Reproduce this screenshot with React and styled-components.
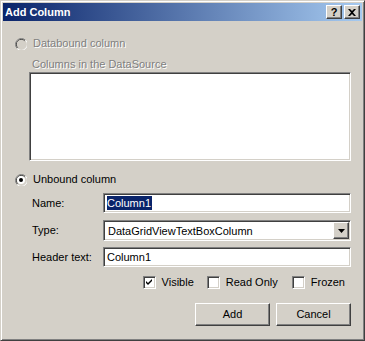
import React from 'react';
import styled, { createGlobalStyle, css } from 'styled-components';

const GlobalStyle = createGlobalStyle`
	html, body {
		margin: 0;
		padding: 0;
		background: #d4d0c8;
	}
	body {
		font-family: 'Liberation Sans', Arial, sans-serif;
		font-size: 11px;
		color: #000;
	}
`;

const sunken = css`
	border: 1px solid;
	border-color: #808080 #fff #fff #808080;
	box-shadow: inset 1px 1px #404040, inset -1px -1px #d4d0c8;
`;

const raised = css`
	border: 1px solid;
	border-color: #fff #404040 #404040 #fff;
	box-shadow: inset -1px -1px #808080;
`;

const Window = styled.div`
	width: 365px;
	height: 341px;
	box-sizing: border-box;
	border: 1px solid;
	border-color: #d4d0c8 #404040 #404040 #d4d0c8;
	box-shadow: inset 1px 1px #fff, inset -1px -1px #808080;
	padding: 2px;
	background: #d4d0c8;
	display: flex;
	flex-direction: column;
`;

const TitleBar = styled.div`
	height: 18px;
	display: flex;
	align-items: center;
	padding: 0 2px;
	background: linear-gradient(to right, #0a246a, #a6caf0);
`;

const TitleText = styled.div`
	flex: 1;
	color: #fff;
	font-weight: bold;
	font-size: 11px;
	line-height: 18px;
`;

const CaptionButton = styled.div`
	width: 16px;
	height: 14px;
	box-sizing: border-box;
	${raised};
	background: #d4d0c8;
	display: flex;
	align-items: center;
	justify-content: center;
	margin-left: ${(p) => (p.gap ? '2px' : '0')};
	font-weight: bold;
	font-size: 11px;
	line-height: 12px;
`;

const Content = styled.div`
	flex: 1;
	display: flex;
	flex-direction: column;
	padding: 0 11px 0 12px;
`;

const RadioRow = styled.div`
	display: flex;
	align-items: center;
	height: 13px;
	margin-top: ${(p) => p.mt}px;
	gap: 6px;
	color: ${(p) => (p.disabled ? '#808080' : '#000')};
	text-shadow: ${(p) => (p.disabled ? '1px 1px #fff' : 'none')};
	line-height: 13px;
`;

const Group = styled.div`
	display: flex;
	flex-direction: column;
	padding-left: 14px;
`;

const GroupLabel = styled.div`
	margin-top: 8px;
	padding-left: 3px;
	line-height: 13px;
	color: #808080;
	text-shadow: 1px 1px #fff;
`;

const ListBox = styled.div`
	margin-top: 1px;
	height: 89px;
	box-sizing: border-box;
	${sunken};
	background: #fff;
`;

const FieldRow = styled.div`
	display: flex;
	align-items: center;
	margin-top: ${(p) => p.mt}px;
	padding-left: 17px;
`;

const FieldLabel = styled.div`
	width: 71px;
	line-height: 13px;
`;

const TextBox = styled.div`
	flex: 1;
	height: ${(p) => p.h}px;
	box-sizing: border-box;
	${sunken};
	background: #fff;
	display: flex;
	align-items: center;
	padding: 0 2px 0 3px;
`;

const Selected = styled.span`
	background: #0a246a;
	color: #fff;
	line-height: 14px;
	padding: 0 1px 0 0;
`;

const ValueText = styled.span`
	flex: 1;
	line-height: 14px;
	padding-left: ${(p) => p.pl || 0}px;
`;

const DropButton = styled.div`
	width: 16px;
	height: 17px;
	box-sizing: border-box;
	margin-right: -1px;
	${raised};
	background: #d4d0c8;
	display: flex;
	align-items: center;
	justify-content: center;
`;

const CheckRow = styled.div`
	display: flex;
	justify-content: flex-end;
	align-items: center;
	margin-top: 9px;
	padding-right: 6px;
	height: 13px;
`;

const CheckItem = styled.label`
	display: flex;
	align-items: center;
	gap: 6px;
	margin-left: ${(p) => p.ml || 0}px;
	line-height: 13px;
`;

const CheckBox = styled.span`
	width: 13px;
	height: 13px;
	box-sizing: border-box;
	${sunken};
	background: #fff;
	display: flex;
	align-items: center;
	justify-content: center;
`;

const ButtonRow = styled.div`
	display: flex;
	justify-content: flex-end;
	gap: 6px;
	margin-top: 14px;
`;

const PushButton = styled.div`
	width: 75px;
	height: 23px;
	box-sizing: border-box;
	${raised};
	background: #d4d0c8;
	display: flex;
	align-items: center;
	justify-content: center;
	line-height: 13px;
`;

const Radio = ({ checked, disabled }) => (
	<svg width='12' height='12' viewBox='0 0 12 12'>
		<path d='M10.5 2.2 A5.5 5.5 0 1 0 2.2 10.5' fill='none' stroke='#808080' />
		<path d='M9.8 2.9 A4.5 4.5 0 1 0 2.9 9.8' fill='none' stroke='#404040' />
		<path d='M2.2 10.5 A5.5 5.5 0 0 0 10.5 2.2' fill='none' stroke='#fff' />
		<path d='M2.9 9.8 A4.5 4.5 0 0 0 9.8 2.9' fill='none' stroke='#d4d0c8' />
		<circle cx='6' cy='6' r='4' fill={disabled ? '#d4d0c8' : '#fff'} />
		{checked && <circle cx='6' cy='6' r='2' fill='#000' />}
	</svg>
);

const Check = () => (
	<svg width='7' height='7' viewBox='0 0 7 7'>
		<path d='M0 2 L2 4 L6 0 V2 L2 6 L0 4 Z' fill='#000' />
	</svg>
);

const App = () => (
	<>
		<GlobalStyle />
		<Window>
			<TitleBar>
				<TitleText>Add Column</TitleText>
				<CaptionButton>?</CaptionButton>
				<CaptionButton gap>
					<svg width='8' height='7' viewBox='0 0 8 7'>
						<path d='M0 0 H2 L4 2 L6 0 H8 L5 3.5 L8 7 H6 L4 5 L2 7 H0 L3 3.5 Z' fill='#000' />
					</svg>
				</CaptionButton>
			</TitleBar>
			<Content>
				<RadioRow mt={16} disabled>
					<Radio disabled />
					<span>Databound column</span>
				</RadioRow>
				<Group>
					<GroupLabel>Columns in the DataSource</GroupLabel>
					<ListBox />
				</Group>
				<RadioRow mt={12}>
					<Radio checked />
					<span>Unbound column</span>
				</RadioRow>
				<FieldRow mt={7}>
					<FieldLabel>Name:</FieldLabel>
					<TextBox h={20}>
						<Selected>Column1</Selected>
					</TextBox>
				</FieldRow>
				<FieldRow mt={7}>
					<FieldLabel>Type:</FieldLabel>
					<TextBox h={21}>
						<ValueText pl={1}>DataGridViewTextBoxColumn</ValueText>
						<DropButton>
							<svg width='7' height='4' viewBox='0 0 7 4'>
								<path d='M0 0 H7 L3.5 4 Z' fill='#000' />
							</svg>
						</DropButton>
					</TextBox>
				</FieldRow>
				<FieldRow mt={6}>
					<FieldLabel>Header text:</FieldLabel>
					<TextBox h={20}>
						<ValueText>Column1</ValueText>
					</TextBox>
				</FieldRow>
				<CheckRow>
					<CheckItem>
						<CheckBox>
							<Check />
						</CheckBox>
						Visible
					</CheckItem>
					<CheckItem ml={13}>
						<CheckBox />
						Read Only
					</CheckItem>
					<CheckItem ml={14}>
						<CheckBox />
						Frozen
					</CheckItem>
				</CheckRow>
				<ButtonRow>
					<PushButton>Add</PushButton>
					<PushButton>Cancel</PushButton>
				</ButtonRow>
			</Content>
		</Window>
	</>
);

export default App;
